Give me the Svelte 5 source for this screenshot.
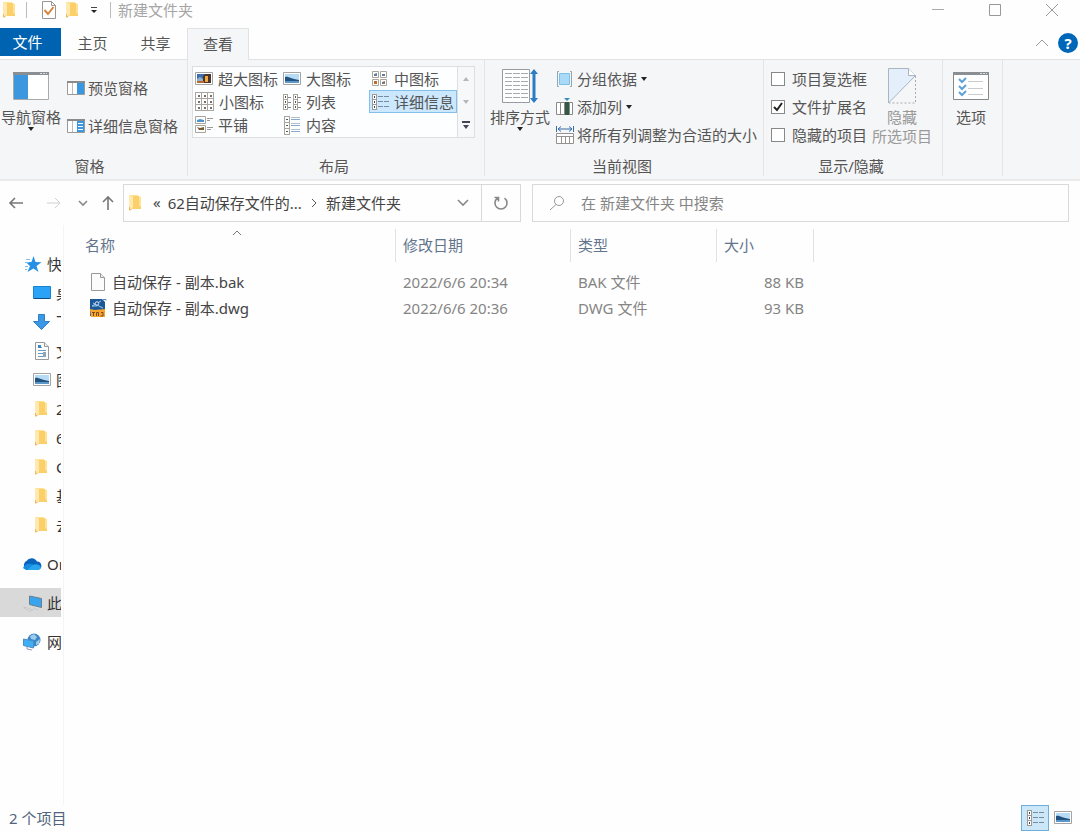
<script>
  let layout = $state('详细信息');
  let current = $state('此电脑');
  const layouts = [
    ['超大图标', 'photo'], ['大图标', 'picture'], ['中图标', 'medium'],
    ['小图标', 'small'], ['列表', 'list'], ['详细信息', 'details'],
    ['平铺', 'tiles'], ['内容', 'content']
  ];
  const quick = [
    ['桌面', 'desktop'], ['下载', 'download'], ['文档', 'document'], ['图片', 'picture'],
    ['2022', 'folder'], ['62自动保存', 'folder'], ['CAD', 'folder'], ['基础', 'folder'], ['去重', 'folder']
  ];
  const roots = [['OneDrive', 'cloud'], ['此电脑', 'pc'], ['网络', 'network']];
  const files = [
    { name: '自动保存 - 副本.bak', icon: 'blank', date: '2022/6/6 20:34', type: 'BAK 文件', size: '88 KB' },
    { name: '自动保存 - 副本.dwg', icon: 'dwg', date: '2022/6/6 20:36', type: 'DWG 文件', size: '93 KB' }
  ];
  const toggles = $state([
    { label: '项目复选框', on: false },
    { label: '文件扩展名', on: true },
    { label: '隐藏的项目', on: false }
  ]);
</script>

{#snippet icon(name)}
  {#if name === 'folder'}
    <svg width="18" height="18" viewBox="0 0 18 18"><path d="M2 1h9v1l3 1v12H5l-2 2-1-1z" fill="#ffe294"/><path d="M6 2h6v10l2 1v2H5z" fill="#fbd06b"/><path d="M2 1l4 2v11l-3 3-1-1z" fill="#ffe9ae"/><path d="M2.500 13v3l2-1" fill="none" stroke="#eab968"/></svg>
  {:else if name === 'photo'}
    <svg width="18" height="18" viewBox="0 0 18 18"><path d="M.5 2.500h17v12H.5z" fill="#fff" stroke="#a3a3a3"/><path d="M2 4h14v9H2z" fill="#3d6fb0"/><path d="M2 9l3-2 3 2 1 4H2z" fill="#8fb0cf"/><path d="M8 6l2-2h6v9H8z" fill="#4b352a"/><path d="M10 6h3v6h-3z" fill="#f2a93b"/><path d="M2 11h7v2H2z" fill="#b9662f"/></svg>
  {:else if name === 'picture'}
    <svg width="18" height="18" viewBox="0 0 18 18"><path d="M.5 2.500h17v12H.5z" fill="#fff" stroke="#a3a3a3"/><path d="M2 4h14v9H2z" fill="#b5dcf4"/><path d="M2 7c4-1 5 2 14 3v1H2z" fill="#24527f"/><path d="M2 11h14v2H2z" fill="#5b97c9"/></svg>
  {:else if name === 'medium'}
    <svg width="18" height="18" viewBox="0 0 18 18"><g fill="#fff" stroke="#a9a49c"><path d="M1.500 1.500h6v6h-6zM9.500 1.500h6v6h-6zM1.500 9.500h6v6h-6zM9.500 9.500h6v6h-6z"/></g><path d="M3 4l3-1v3H3zM11 4h3v2h-3z" fill="#5c7f9f"/><path d="M3 11h3v3H3z" fill="#c26b2c"/><path d="M11 12l3-1v3h-3z" fill="#777"/></svg>
  {:else if name === 'small'}
    <svg width="19" height="19" viewBox="0 0 19 19"><path d="M.5.5h18v18H.5z" fill="#fff"/>{#each [0, 6, 12] as y}{#each [0, 6, 12] as x}<rect x={x + 0.5} y={y + 0.5} width="6" height="6" fill="#fff" stroke="#aaa59e"/><rect x={x + 3} y={y + 3} width="2" height="2" fill="#77706a"/>{/each}{/each}</svg>
  {:else if name === 'list'}
    <svg width="18" height="18" viewBox="0 0 18 18">{#each [1, 6, 11] as y}{#each [0, 10] as x}<rect x={x + 0.5} y={y + 0.5} width="4" height="5" fill="#fff" stroke="#a9a49c"/><rect x={x + 2} y={y + 2} width="1" height="2" fill="#555"/><path d="M{x + 5} {y + 3.5}h3" stroke="#888"/>{/each}{/each}</svg>
  {:else if name === 'details'}
    <svg width="18" height="18" viewBox="0 0 18 18">{#each [1, 6, 11] as y}<rect x="1.500" y={y + 0.5} width="4" height="5" fill="#fff" stroke="#9c9a96"/><rect x="3" y={y + 2} width="1" height="2" fill="#444"/><path d="M7 {y + 2.5}h5m1 0h5" stroke="#7a8b9c"/>{/each}</svg>
  {:else if name === 'tiles'}
    <svg width="18" height="18" viewBox="0 0 18 18"><g fill="#fff" stroke="#a9a49c"><path d="M.5.5h10v7H.5zM.5 9.500h10v7H.5z"/></g><path d="M2 4l3-1 4 1v2H2z" fill="#4e93c9"/><path d="M2 11l3 1 4-1v3H4z" fill="#7a5a35"/><path d="M12 2.500h6M12 4.500h3M12 11.500h6M12 13.500h4" stroke="#999"/></svg>
  {:else if name === 'content'}
    <svg width="18" height="20" viewBox="0 0 18 20">{#each [1, 7, 13] as y}<rect x="1.500" y={y + 0.5} width="5" height="6" fill="#fff" stroke="#a9a49c"/><rect x="3" y={y + 3} width="2" height="1" fill="#555"/><path d="M8 {y + 1.5}h9" stroke="#b4bec8"/><path d="M8 {y + 3.5}h9" stroke="#88a8d2"/>{/each}</svg>
  {:else if name === 'preview' || name === 'info'}
    <svg width="18" height="18" viewBox="0 0 18 18"><path d="M.5 2.500h17v13H.5z" fill="#fff" stroke="#999"/><path d="M0 3h18" stroke="#8b8b8b" stroke-width="2"/><path d="M5.500 4v11" stroke="#bbb"/><path d="M10 4h7v11h-7z" fill="#3897e0"/>{#if name === 'info'}<path d="M11 6.500h5M11 9.500h5M11 12.500h5" stroke="#fff"/>{/if}</svg>
  {:else if name === 'group'}
    <svg width="18" height="18" viewBox="0 0 18 18"><path d="M3 1.500H1.500v15H3M14 1.500h1.500v15H14" fill="none" stroke="#93a4b2"/><path d="M3.500 3.500h10v11h-10z" fill="#a9dbf8" stroke="#7fc0e6"/></svg>
  {:else if name === 'addcol'}
    <svg width="18" height="18" viewBox="0 0 18 18"><path d="M.5 4.500h16v12H.5zM4.500 4v12M8.500 4v12M13.500 4v12" fill="#fff" stroke="#8a8a8a"/><path d="M9 4h4v13H9z" fill="#315943"/><path d="M8 0h6l-3 3z" fill="#398cc2"/></svg>
  {:else if name === 'fit'}
    <svg width="18" height="18" viewBox="0 0 18 18"><path d="M.5 0v6M17.500 0v6M2 3h14M5 .5L2 3l3 2.500M13 .5L16 3l-3 2.500" fill="none" stroke="#356da6"/><path d="M.5 7.500h17v10H.5zM1 10.500h17M5.500 11v6M9.500 11v6M13.500 11v6" fill="#fff" stroke="#969191"/></svg>
  {:else if name === 'desktop'}
    <svg width="18" height="18" viewBox="0 0 18 18"><path d="M.5 2.500h17v12H.5z" fill="#2aa2f5" stroke="#1684d2"/><path d="M1 14.500h16" stroke="#0c4c82"/></svg>
  {:else if name === 'download'}
    <svg width="18" height="18" viewBox="0 0 18 18"><path d="M5.500 1.500h6v7h5L8.500 16.500l-8-8h5z" fill="#3a98e4" stroke="#2b7fc8"/></svg>
  {:else if name === 'document' || name === 'blank'}
    <svg width="18" height="18" viewBox="0 0 18 18"><path d="M2.500.5h9l4 4v13h-13z" fill="#fcfcfc" stroke="#999"/><path d="M11.500.5v4h4" fill="#eee" stroke="#999"/>{#if name === 'document'}<path d="M5 5.500h4M5 8.500h8M5 11.500h8M5 14.500h8" stroke="#6b9cc0"/><path d="M5 3h3v3H5z" fill="#3f86c0"/><path d="M10 10h3v5h-3z" fill="#8ea7b8"/>{/if}</svg>
  {:else if name === 'dwg'}
    <svg width="18" height="20" viewBox="0 0 18 20"><path d="M1 1h12l3 3v14H1z" fill="#1d5896"/><path d="M3 8l9-5M4 5l10 5M3 8h5" stroke="#9acaf1"/><circle cx="8" cy="5.500" r="1.700" fill="#164c87" stroke="#d8ecff"/><path d="M1 11l5 1 10-1v8H2z" fill="#f6a62d"/><path d="M3 14.500h3M4.500 15v3M7.500 18v-3.500h2V18M12 14.500h2V18h-2.500" fill="none" stroke="#7b4820"/><path d="M14 1.500h3v1" fill="none" stroke="#5085b5"/></svg>
  {:else if name === 'star'}
    <svg width="18" height="18" viewBox="0 0 18 18"><path d="M9.500 1l2 6 6 .3-5 3.700 2 6-5-3.500-6 3.500 2.500-6L2 7.300 7.500 7z" fill="#2790e6"/><path d="M2 4.500h4M1 7.500h4M1 11.500h3M1 14.500h2" stroke="#77bdf0"/></svg>
  {:else if name === 'cloud'}
    <svg width="20" height="18" viewBox="0 0 20 18"><path d="M5 15a5 5 0 0 1-.5-9A6 6 0 0 1 15 6.500 4.300 4.300 0 0 1 16 15z" fill="#0a64bd"/><path d="M1 13c2-5 7-5 10-3.500L18 13l-2 2H4z" fill="#168ce2"/><path d="M5 15l6-5c4-3 12 3 5 5z" fill="#28a5ec"/></svg>
  {:else if name === 'pc'}
    <svg width="20" height="18" viewBox="0 0 20 18"><path d="M7.500 2l12 2.500v9l-12-3z" fill="#38a4f0" stroke="#6c7f8d"/><path d="M12 12.500v2l4 1M2 13l9 3-3 1-6-3z" fill="#e8e8e8" stroke="#c4c7ca"/></svg>
  {:else if name === 'network'}
    <svg width="20" height="18" viewBox="0 0 20 18"><circle cx="12" cy="7" r="6.500" fill="#3b86c7"/><path d="M8 3l4-2 3 3-2 3-4-1zM14 9l4-3-1 5-3 1z" fill="#9cccea"/><path d="M1.500 6l10 2v7l-10-2.500z" fill="#40aef5" stroke="#4a8fc4"/><path d="M5 14v2l5 1" fill="none" stroke="#99a"/></svg>
  {/if}
{/snippet}

{#snippet arrow()}<svg class="arrow" width="6" height="4" viewBox="0 0 6 4"><path d="M0 0h6L3 4z" fill="#222"/></svg>{/snippet}

<div class="window">
  <header class="title">
    <div class="quickbar">
      {@render icon('folder')}
      <i class="bar"></i>
      <button aria-label="属性"><svg width="16" height="18" viewBox="0 0 16 18"><path d="M1.500.5h9l4 4v13h-13z" fill="#fff" stroke="#9a9692"/><path d="M10.500.5v4h4" fill="none" stroke="#9a9692"/><path d="M3.500 9l3.500 4 5.500-7" fill="none" stroke="#d78539" stroke-width="2"/></svg></button>
      <button aria-label="新建文件夹">{@render icon('folder')}</button>
      <button class="custom" aria-label="自定义快速访问工具栏"><svg width="8" height="7" viewBox="0 0 8 7"><path d="M1 .5h6" stroke="#444"/><path d="M1 3h6L4 6z" fill="#222"/></svg></button>
      <i class="bar"></i>
      <span class="caption">新建文件夹</span>
    </div>
    <div class="winbtns">
      <button aria-label="最小化"><svg width="12" height="12"><path d="M0 5.500h12" stroke="#aaa"/></svg></button>
      <button aria-label="最大化"><svg width="12" height="12"><path d="M.5.5h11v11H.5z" fill="none" stroke="#999"/></svg></button>
      <button aria-label="关闭"><svg width="12" height="12"><path d="M0 0l12 12M12 0L0 12" stroke="#999"/></svg></button>
    </div>
  </header>

  <nav class="tabs">
    <button class="file">文件</button>
    <button>主页</button>
    <button>共享</button>
    <button class="active">查看</button>
    <span class="spacer"></span>
    <button class="mini" aria-label="折叠功能区"><svg width="14" height="8"><path d="M1 7l6-6 6 6" fill="none" stroke="#999"/></svg></button>
    <button class="help" aria-label="帮助">?</button>
  </nav>

  <section class="ribbon">
    <div class="group panes">
      <div class="body">
        <button class="big">
          <svg width="36" height="28" viewBox="0 0 36 28"><path d="M.5.5h35v27H.5z" fill="#fff" stroke="#aaa"/><path d="M0 0h36v3H0z" fill="#8a8f94"/><path d="M27 1.500h7" stroke="#ddd" stroke-dasharray="2 1"/><path d="M1 3h14v24H1z" fill="#3c97de"/></svg>
          <span>导航窗格</span>{@render arrow()}
        </button>
        <div class="stack wide">
          <button class="row">{@render icon('preview')}预览窗格</button>
          <button class="row">{@render icon('info')}详细信息窗格</button>
        </div>
      </div>
      <p>窗格</p>
    </div>

    <div class="group layout">
      <div class="body">
        <div class="gallery">
          <div class="options">
            {#each layouts as [label, glyph]}
              <button class:selected={layout === label} onclick={() => (layout = label)}>{@render icon(glyph)}{label}</button>
            {/each}
          </div>
          <div class="scroll">
            <button aria-label="上一行"><svg width="6" height="4"><path d="M0 4l3-4 3 4z" fill="#b5b8bb"/></svg></button>
            <button aria-label="下一行"><svg width="6" height="4"><path d="M0 0h6L3 4z" fill="#b5b8bb"/></svg></button>
            <button aria-label="更多"><svg width="8" height="8"><path d="M0 1h8" stroke="#445" stroke-width="2"/><path d="M1 4h6L4 8z" fill="#445"/></svg></button>
          </div>
        </div>
      </div>
      <p>布局</p>
    </div>

    <div class="group view">
      <div class="body">
        <button class="big sort">
          <svg width="36" height="36" viewBox="0 0 36 36"><path d="M.5 1.500h27v33H.5z" fill="#fff" stroke="#959ba1"/><path d="M3 5.500h23M3 9.500h23M3 13.500h23M3 17.500h23M3 21.500h23M3 25.500h23M3 29.500h23" stroke="#a5a9ad" stroke-dasharray="7 1"/><path d="M32 4v29" stroke="#2b7cc4" stroke-width="3"/><path d="M28 6l4-5 4 5zM28 30l4 5 4-5z" fill="#2b7cc4"/></svg>
          <span>排序方式</span>{@render arrow()}
        </button>
        <div class="stack">
          <button class="row">{@render icon('group')}分组依据{@render arrow()}</button>
          <button class="row">{@render icon('addcol')}添加列{@render arrow()}</button>
          <button class="row">{@render icon('fit')}将所有列调整为合适的大小</button>
        </div>
      </div>
      <p>当前视图</p>
    </div>

    <div class="group show">
      <div class="body">
        <div class="stack">
          {#each toggles as t}
            <label class="row"><input type="checkbox" bind:checked={t.on} />{t.label}</label>
          {/each}
        </div>
        <button class="big hide" disabled>
          <svg width="28" height="36" viewBox="0 0 28 36"><path d="M.5.5h20l7 7L.5 35z" fill="#e4effb" stroke="#a9b5c3"/><path d="M20.500.5v7h7" fill="#fff" stroke="#a9b5c3"/><path d="M27.500 8v27H1" fill="none" stroke="#aaa" stroke-dasharray="2 2"/></svg>
          <span>隐藏<br />所选项目</span>
        </button>
      </div>
      <p>显示/隐藏</p>
    </div>

    <div class="group opts">
      <div class="body">
        <button class="big">
          <svg width="36" height="28" viewBox="0 0 36 28"><path d="M.5.5h35v27H.5z" fill="#fff" stroke="#888"/><path d="M0 0h36v3H0z" fill="#8a8f94"/><path d="M27 1.500h7" stroke="#ddd" stroke-dasharray="2 1"/><path d="M15 9.500h15M15 16.500h15M15 22.500h15" stroke="#ccc"/><path d="M6 7l3 3 4-4M6 14l3 3 4-4M6 20l3 3 4-4" fill="none" stroke="#5ba1da" stroke-width="2"/></svg>
          <span>选项</span>
        </button>
      </div>
    </div>
  </section>

  <div class="address">
    <div class="history">
      <button aria-label="后退"><svg width="16" height="14"><path d="M15 7H2M7 2L2 7l5 5" fill="none" stroke="#777" stroke-width="1.600"/></svg></button>
      <button aria-label="前进" disabled><svg width="16" height="14"><path d="M1 7h13M9 2l5 5-5 5" fill="none" stroke="#d0d0d0"/></svg></button>
      <button class="recent" aria-label="最近浏览的位置"><svg width="10" height="7"><path d="M1 1l4 4 4-4" fill="none" stroke="#888" stroke-width="1.600"/></svg></button>
      <button class="up" aria-label="上移"><svg width="14" height="16"><path d="M7 15V2M2 7l5-5 5 5" fill="none" stroke="#777" stroke-width="1.600"/></svg></button>
    </div>
    <div class="path">
      {@render icon('folder')}
      <span class="chev">«</span>
      <a href="#parent">62自动保存文件的...</a>
      <svg width="6" height="10"><path d="M1 1l4 4-4 4" fill="none" stroke="#555"/></svg>
      <a href="#folder">新建文件夹</a>
      <button class="drop" aria-label="以前的位置"><svg width="12" height="8"><path d="M1 1l5 5 5-5" fill="none" stroke="#888" stroke-width="1.600"/></svg></button>
      <button class="refresh" aria-label="刷新"><svg width="16" height="16" viewBox="0 0 16 16"><path d="M11.500 3.200a6 6 0 1 1-7 0M1.500 2.500h4v4" fill="none" stroke="#888" stroke-width="1.600"/></svg></button>
    </div>
    <label class="search">
      <svg width="16" height="16"><circle cx="10" cy="6" r="4.500" fill="none" stroke="#999"/><path d="M7 9.500L1 15" stroke="#999"/></svg>
      <input type="search" aria-label="搜索" placeholder="在 新建文件夹 中搜索" />
    </label>
  </div>

  <main>
    <aside>
      <a class="root" href="#quick">{@render icon('star')}快速访问</a>
      {#each quick as [label, glyph]}
        <a class="sub" href="#{label}">{@render icon(glyph)}{label}</a>
      {/each}
      {#each roots as [label, glyph]}
        <a class="root gap" class:current={current === label} href="#{label}" onclick={() => (current = label)}>{@render icon(glyph)}{label}</a>
      {/each}
    </aside>
    <div class="files">
      <table>
        <colgroup><col class="c1" /><col class="c2" /><col class="c3" /><col class="c4" /></colgroup>
        <thead>
          <tr>
            <th scope="col"><div>名称<svg class="sorted" width="10" height="6"><path d="M1 5l4-4 4 4" fill="none" stroke="#777"/></svg></div></th>
            <th scope="col"><div>修改日期</div></th>
            <th scope="col"><div>类型</div></th>
            <th scope="col"><div>大小</div></th>
          </tr>
        </thead>
        <tbody>
          {#each files as f}
            <tr>
              <td><span class="name">{@render icon(f.icon)}{f.name}</span></td>
              <td>{f.date}</td>
              <td>{f.type}</td>
              <td class="size">{f.size}</td>
            </tr>
          {/each}
        </tbody>
      </table>
    </div>
  </main>

  <footer>
    <span>2 个项目</span>
    <div class="modes">
      <button class="on" aria-label="详细信息视图">{@render icon('details')}</button>
      <button aria-label="大图标视图">{@render icon('picture')}</button>
    </div>
  </footer>
</div>

<style>
  :global(body) { margin: 0; background: #fff; }
  .window {
    min-height: 100vh;
    display: flex;
    flex-direction: column;
    background: #fefefe;
    color: #555;
    font: 15px/20px "Noto Sans", "Noto Sans CJK SC", sans-serif;
    overflow: hidden;
  }
  * { box-sizing: border-box; }
  svg { display: block; flex: none; }
  button, input { font: inherit; color: inherit; }
  button { display: flex; align-items: center; justify-content: center; padding: 0; border: 0; background: none; white-space: nowrap; }
  a { color: inherit; text-decoration: none; white-space: nowrap; }

  .title { display: flex; justify-content: space-between; height: 28px; }
  .quickbar { display: flex; align-items: center; height: 20px; }
  .quickbar > :global(svg) { margin-left: 1px; }
  .bar { width: 1px; height: 16px; background: #bbb; margin: 0 7px; }
  .quickbar > button { margin-left: 7px; }
  .quickbar .custom { width: 18px; margin-left: 3px; }
  .caption { color: #a5a5a5; }
  .winbtns { display: flex; height: 20px; }
  .winbtns button { width: 57px; }

  .tabs { display: flex; height: 32px; position: relative; z-index: 1; margin-bottom: -1px; }
  .tabs button { width: 63px; height: 29px; }
  .tabs .file { width: 61px; height: 28px; background: #0063b1; color: #fff; padding-right: 6px; }
  .tabs .active { height: 32px; width: 62px; padding-bottom: 2px; background: #f5f6f7; border: 1px solid #e0e2e4; border-bottom: 0; }
  .spacer { flex: 1; }
  .tabs .mini { width: 14px; margin-right: 9px; }
  .tabs .help { width: 20px; height: 20px; margin: 5px 2px 0 0; border-radius: 50%; background: #0067b8; color: #fff; font-weight: 700; }

  .ribbon { display: flex; height: 122px; background: #f5f6f7; border-top: 1px solid #e0e2e4; border-bottom: 2px solid #ebebeb; }
  .group { display: flex; flex-direction: column; border-right: 1px solid #e3e5e7; margin-bottom: 3px; }
  .group .body { display: flex; flex: 1; padding-top: 8px; }
  .group p { margin: 0; padding-right: 4px; text-align: center; line-height: 20px; }
  .panes { width: 188px; }
  .group.panes p { padding-right: 8px; }
  .layout { width: 297px; }
  .view { width: 279px; }
  .show { width: 179px; }
  .opts { width: 60px; }
  .big { flex-direction: column; justify-content: flex-start; width: 62px; padding-top: 4px; }
  .big span { margin-top: 8px; line-height: 19px; }
  .sort, .hide { padding-top: 0; }
  .sort { margin-left: 3px; width: 64px; }
  .sort span, .hide span { margin-top: 4px; }
  .hide { width: 60px; margin-left: 5px; color: #999; }
  .opts .big { width: 56px; }
  .stack { display: flex; flex-direction: column; gap: 8px; margin-left: 4px; padding-top: 1px; }
  .stack.wide { gap: 18px; padding-top: 10px; margin-left: 5px; }
  .row { display: flex; justify-content: flex-start; align-items: center; gap: 3px; height: 20px; white-space: nowrap; }
  .row :global(.arrow) { margin-left: 1px; }
  .show .stack { margin-left: 7px; }
  .show .row { gap: 7px; }
  .row input { appearance: none; width: 14px; height: 14px; margin: 0; border: 1px solid #888; background: #fff; }
  .row input:checked { background: #fff url("data:image/svg+xml,%3Csvg xmlns='http://www.w3.org/2000/svg' viewBox='0 0 12 12'%3E%3Cpath d='M2 6l3 3 5-7' fill='none' stroke='%23222' stroke-width='2'/%3E%3C/svg%3E"); }

  .gallery { display: flex; height: 72px; margin-left: 4px; border: 1px solid #dcdee0; background: #fdfeff; margin-top: -2px; }
  .options { display: grid; grid-template-columns: repeat(3, 88px); grid-template-rows: repeat(3, 23px); }
  .options button { justify-content: flex-start; gap: 5px; padding-left: 1px; border: 1px solid transparent; }
  .options .selected { background: #cce8ff; border-color: #84bfea; }
  .scroll { width: 17px; display: grid; grid-template-rows: repeat(3, 23px); border-left: 1px solid #dcdee0; background: #f7f8f9; }

  .address { display: flex; height: 44px; padding: 3px 11px 3px 0; }
  .history { display: flex; align-items: center; width: 123px; flex: none; padding-left: 8px; }
  .history button:first-child { margin-right: 22px; }
  .history .recent { margin-left: 16px; }
  .history .up { margin-left: 13px; }
  .path { display: flex; align-items: center; flex: 396; border: 1px solid #d9d9d9; color: #444; }
  .path > :global(svg:first-child) { margin-left: 3px; }
  .chev { margin: 0 7px 3px 8px; }
  .path > :global(svg:not(:first-child)) { margin: 0 9px; }
  .drop { width: 36px; height: 100%; margin-left: auto; }
  .refresh { width: 39px; height: 100%; border-left: 1px solid #d9d9d9; }
  .search { display: flex; align-items: center; gap: 16px; flex: 519; margin-left: 11px; padding-left: 16px; border: 1px solid #d9d9d9; }
  .search input { flex: 1; border: 0; padding: 0; outline: 0; background: none; }
  .search input::placeholder { color: #858585; opacity: 1; }

  main { display: flex; flex: 1; }
  aside { width: 61px; flex: none; overflow: hidden; padding-top: 24px; color: #333; }
  aside a { display: flex; align-items: center; height: 29px; gap: 5px; padding-left: 24px; }
  aside .sub { padding-left: 33px; }
  aside .gap { margin-top: 10px; padding-left: 22px; }
  .current { background: #d9d9d9; }
  .files { flex: 1; margin-left: 2px; border-left: 1px solid #f4f4f4; padding-left: 14px; }
  table { border-collapse: collapse; table-layout: fixed; width: 736px; }
  .c1 { width: 318px; } .c2 { width: 175px; } .c3 { width: 146px; } .c4 { width: 97px; }
  th { padding: 4px 0 7px; text-align: left; font-weight: 400; color: #63758c; }
  th div { position: relative; border-right: 1px solid #e2e2e2; height: 33px; line-height: 33px; padding-left: 7px; }
  .sorted { position: absolute; left: 154px; top: 1px; }
  td { height: 26px; padding: 0 0 0 7px; color: #858585; white-space: nowrap; }
  .name { display: flex; align-items: center; gap: 5px; padding-left: 4px; color: #444; }
  td.size { text-align: right; padding-right: 10px; }

  footer { display: flex; justify-content: space-between; height: 26px; padding: 0 3px 0 9px; color: #50657c; line-height: 27px; }
  .modes { display: flex; }
  .modes button { width: 28px; }
  .modes .on { background: #cce8f8; border: 1px solid #6faed8; }
</style>
